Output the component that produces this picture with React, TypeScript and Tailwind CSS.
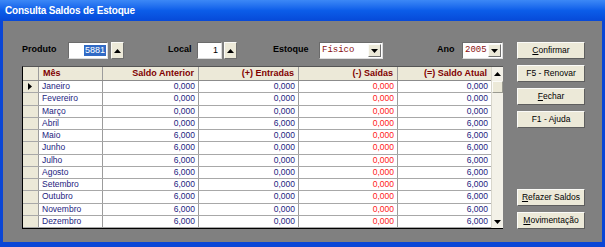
import React from 'react';

const months = [
  'Janeiro', 'Fevereiro', 'Março', 'Abril', 'Maio', 'Junho',
  'Julho', 'Agosto', 'Setembro', 'Outubro', 'Novembro', 'Dezembro',
];

const rows = months.map((m, i) => ({
  mes: m,
  anterior: i < 4 ? '0,000' : '6,000',
  entradas: i === 3 ? '6,000' : '0,000',
  saidas: '0,000',
  atual: i < 3 ? '0,000' : '6,000',
}));

const Up = () => (
  <svg width="7" height="4" viewBox="0 0 7 4">
    <path d="M0 4 L3.5 0 L7 4 Z" fill="#000" />
  </svg>
);

const Down = () => (
  <svg width="7" height="4" viewBox="0 0 7 4">
    <path d="M0 0 L7 0 L3.5 4 Z" fill="#000" />
  </svg>
);

const Spin = () => (
  <div className="w-[13px] h-[17px] bg-[#ece9d8] border border-t-[#fbfbf8] border-l-[#fbfbf8] border-r-[#6f6f6f] border-b-[#6f6f6f] flex items-center justify-center">
    <Up />
  </div>
);

const Combo = ({ value, w }: { value: string; w: string }) => (
  <div className={`${w} h-[17px] bg-white border border-t-[#6b6b6b] border-l-[#6b6b6b] border-r-[#dcdcdc] border-b-[#dcdcdc] flex items-center`}>
    <span className="flex-1 pl-[2px] font-['Liberation_Mono',monospace] text-[9px] text-[#8a1010]">{value}</span>
    <div className="w-[13px] h-[13px] mr-[1px] bg-[#ece9d8] border border-t-[#fbfbf8] border-l-[#fbfbf8] border-r-[#6f6f6f] border-b-[#6f6f6f] flex items-center justify-center">
      <Down />
    </div>
  </div>
);

const Label = ({ children, w }: { children: React.ReactNode; w: string }) => (
  <div className={`${w} pt-[1px] font-bold text-[9px] text-black leading-[12px]`}>{children}</div>
);

const Btn = ({ children }: { children: React.ReactNode }) => (
  <button className="w-[68px] h-[17px] bg-[#ece9d8] border border-t-[#fbfbf8] border-l-[#fbfbf8] border-r-[#5e5e5e] border-b-[#5e5e5e] text-[8.5px] text-black leading-none flex items-center justify-center">
    {children}
  </button>
);

const cols = ['w-[64px]', 'w-[96px]', 'w-[100px]', 'w-[99px]', 'w-[93px]'];

export default function App() {
  return (
    <div className="w-[605px] h-[247px] bg-[#0a46d6] flex flex-col font-['Liberation_Sans',Arial,sans-serif]">
      <div className="h-[21px] bg-gradient-to-b from-[#3c88f6] via-[#0c5de9] to-[#0749d8] flex items-center pl-[5px] text-white font-bold text-[10px] tracking-[-0.2px]">
        Consulta Saldos de Estoque
      </div>

      <div className="flex-1 ml-[3px] mr-[3px] mb-[5px] bg-[#808080] flex pt-[21px] pl-[19px]">
        {/* left: filters + grid */}
        <div className="w-[481px] flex flex-col">
          <div className="flex h-[17px] items-start">
            <Label w="w-[46px]">Produto</Label>
            <div className="w-[40px] h-[17px] bg-white border border-t-[#6b6b6b] border-l-[#6b6b6b] border-r-[#dcdcdc] border-b-[#dcdcdc] flex items-center justify-end pr-[1px]">
              <span className="bg-[#316ac5] text-white text-[9px] leading-[11px] px-[1px]">5881</span>
            </div>
            <div className="ml-[3px]"><Spin /></div>
            <Label w="ml-[44px] w-[29px]">Local</Label>
            <div className="w-[25px] h-[17px] bg-white border border-t-[#6b6b6b] border-l-[#6b6b6b] border-r-[#dcdcdc] border-b-[#dcdcdc] flex items-center justify-end pr-[3px] text-[9px] text-black">
              1
            </div>
            <div className="ml-[2px]"><Spin /></div>
            <Label w="ml-[36px] w-[46px]">Estoque</Label>
            <Combo value="Físico" w="w-[64px]" />
            <Label w="ml-[54px] w-[25px]">Ano</Label>
            <Combo value="2005" w="w-[41px]" />
          </div>

          <div className="mt-[7px] h-[163px] flex border-l border-b border-l-black border-b-black border-t border-t-[#555]">
            <div className="flex-1 flex flex-col bg-white">
              {/* header */}
              <div className="h-[14px] flex bg-[#ece9d8] border-b border-b-[#8c8c8c] text-[9px] font-bold text-[#800000] leading-[13px]">
                <div className="w-[16px] border-r border-r-[#9c9c9c]" />
                <div className={`${cols[0]} border-r border-r-[#9c9c9c] pl-[4px]`}>Mês</div>
                <div className={`${cols[1]} border-r border-r-[#9c9c9c] pr-[4px] text-right`}>Saldo Anterior</div>
                <div className={`${cols[2]} border-r border-r-[#9c9c9c] pr-[4px] text-right`}>(+) Entradas</div>
                <div className={`${cols[3]} border-r border-r-[#9c9c9c] pr-[4px] text-right`}>(-) Saídas</div>
                <div className={`${cols[4]} pr-[4px] text-right`}>(=) Saldo Atual</div>
              </div>
              {rows.map((r, i) => (
                <div key={r.mes} className="h-[12.4px] flex border-b border-b-[#a8a8a8] text-[8.5px] leading-[11px] text-[#1c1c80]">
                  <div className="w-[16px] bg-[#ece9d8] border-r border-r-[#9c9c9c] flex items-center pl-[5px]">
                    {i === 0 && (
                      <svg width="4" height="7" viewBox="0 0 4 7">
                        <path d="M0 0 L4 3.5 L0 7 Z" fill="#000" />
                      </svg>
                    )}
                  </div>
                  <div className={`${cols[0]} border-r border-r-[#9c9c9c] pl-[3px]`}>{r.mes}</div>
                  <div className={`${cols[1]} border-r border-r-[#9c9c9c] pr-[3px] text-right`}>{r.anterior}</div>
                  <div className={`${cols[2]} border-r border-r-[#9c9c9c] pr-[3px] text-right`}>{r.entradas}</div>
                  <div className={`${cols[3]} border-r border-r-[#9c9c9c] pr-[3px] text-right text-[#ff1a1a]`}>{r.saidas}</div>
                  <div className={`${cols[4]} pr-[3px] text-right`}>{r.atual}</div>
                </div>
              ))}
            </div>
            {/* scrollbar */}
            <div className="w-[13px] bg-[#f3f1e8] border-l border-l-[#d8d6cc] flex flex-col items-center">
              <div className="h-[14px] flex items-center justify-center"><Up /></div>
              <div className="w-[11px] h-[12px] bg-[#ece9d8] border border-t-[#fbfbf8] border-l-[#fbfbf8] border-r-[#9a9a90] border-b-[#9a9a90]" />
              <div className="flex-1" />
              <div className="h-[12px] flex items-center justify-center"><Down /></div>
            </div>
          </div>
        </div>

        {/* right: buttons */}
        <div className="ml-[14px] flex flex-col pb-[13px]">
          <div className="flex flex-col gap-[6px]">
            <Btn><span><u>C</u>onfirmar</span></Btn>
            <Btn>F5 - Renovar</Btn>
            <Btn><span><u>F</u>echar</span></Btn>
            <Btn>F1 - Ajuda</Btn>
          </div>
          <div className="mt-auto flex flex-col gap-[6px]">
            <Btn><span><u>R</u>efazer Saldos</span></Btn>
            <Btn><span><u>M</u>ovimentação</span></Btn>
          </div>
        </div>
      </div>
    </div>
  );
}
